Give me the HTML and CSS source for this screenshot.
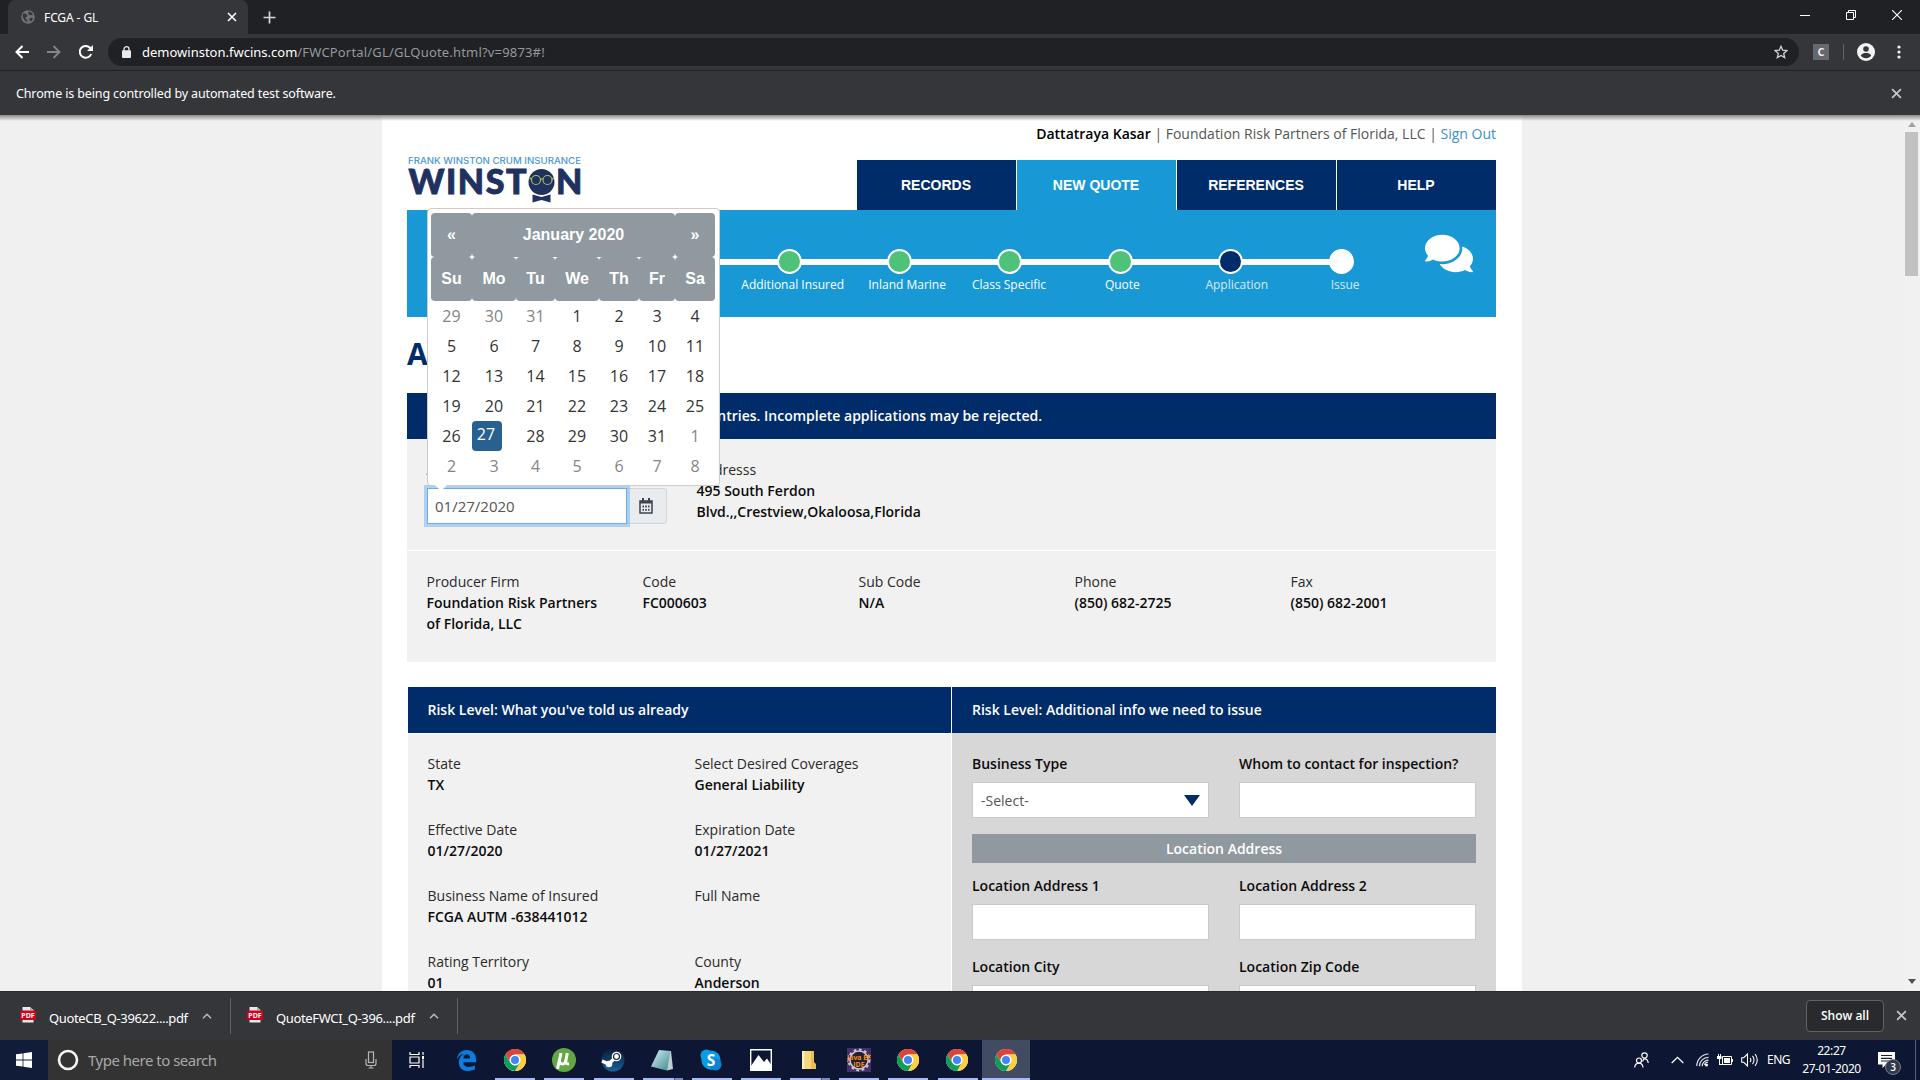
FILE: index.html
```html
<!DOCTYPE html>
<html lang="en">
<head>
<meta charset="utf-8">
<title>FCGA - GL</title>
<link rel="stylesheet" href="styles.css">
</head>
<body>
<svg width="0" height="0" class="defs">
  <defs>
    <symbol id="chrome" viewBox="0 0 24 24">
      <circle cx="12" cy="12" r="12" fill="#fff"/>
      <path d="M12 0A12 12 0 0 1 22.4 6H12a6 6 0 0 0-5.2 9L1.6 6A12 12 0 0 1 12 0z" fill="#db4437"/>
      <path d="M22.4 6A12 12 0 0 1 12 24l5.2-9A6 6 0 0 0 12 6z" fill="#ffcd40"/>
      <path d="M12 24A12 12 0 0 1 1.6 6l5.2 9a6 6 0 0 0 10.4 0z" fill="#0f9d58"/>
      <circle cx="12" cy="12" r="5.6" fill="#fff"/>
      <circle cx="12" cy="12" r="4.4" fill="#4285f4"/>
    </symbol>
    <symbol id="pdf" viewBox="0 0 16 17">
      <path d="M2.5 1h7.500l3.500 3v12.500h-11z" fill="#e9e9e9"/>
      <path d="M10 1v3h3.500z" fill="#aaa"/>
      <rect x="0" y="4.500" width="16" height="9.500" rx="1" fill="#d0021b"/>
      <text x="8" y="12" text-anchor="middle" font-size="7" font-weight="700" fill="#fff">PDF</text>
    </symbol>
    <symbol id="chev" viewBox="0 0 10 6"><path d="M1 5.200 5 1.200l4 4" fill="none" stroke="currentColor" stroke-width="1.500"/></symbol>
    <symbol id="cross" viewBox="0 0 10 10"><path d="M1 1l8 8M9 1l-8 8" fill="none" stroke="currentColor" stroke-width="1.600"/></symbol>
  </defs>
</svg>

<header class="browser">
  <div class="tabstrip">
    <div class="tab">
      <svg class="globe" width="14" height="14" viewBox="0 0 14 14"><circle cx="7" cy="7" r="6.800" fill="#6f7276"/><path d="M2 4c2-1 3 0 4 1s-.5 2-1.500 2.500S6 9.500 6.500 11 4 11 3 9.500 1.500 6 2 4zM8 1.500c1.500.5 3.500 1.500 4 3.500-1 1-2-.5-3 0s-2-1-1.800-2zM9 8c1.500-.5 2.500 0 3 .5-.5 1.500-1.500 2.500-2.500 3C8.500 10.500 8 9 9 8z" fill="#35363a"/></svg>
      <span class="tab-title">FCGA - GL</span>
      <svg class="tab-x" width="10" height="10"><use href="#cross"/></svg>
    </div>
    <svg class="plus" width="13" height="13" viewBox="0 0 13 13"><path d="M6.500 .5v12M.5 6.500h12" stroke="#d5d7da" stroke-width="1.700"/></svg>
    <div class="winbtns">
      <svg width="10" height="10" viewBox="0 0 10 10"><path d="M0 5.500h10" stroke="#fff"/></svg>
      <svg width="10" height="10" viewBox="0 0 10 10"><path d="M.5 2.500h7v7h-7zM2.500 2.500v-2h7v7h-2" fill="none" stroke="#fff"/></svg>
      <svg width="10" height="10" viewBox="0 0 10 10"><path d="M0 0l10 10M10 0L0 10" stroke="#fff" stroke-width="1.100"/></svg>
    </div>
  </div>
  <div class="toolbar">
    <svg class="nav" width="14" height="14" viewBox="0 0 14 14"><path d="M14 7H1.500M7.500 1 1.500 7l6 6" fill="none" stroke="#fff" stroke-width="2"/></svg>
    <svg class="nav" width="14" height="14" viewBox="0 0 14 14"><path d="M0 7h12.500M6.500 1l6 6-6 6" fill="none" stroke="#84878a" stroke-width="1.800"/></svg>
    <svg class="nav" width="14" height="14" viewBox="0 0 14 14"><path d="M12.200 9A5.900 5.900 0 1 1 11 2.800l1 1.100" fill="none" stroke="#fff" stroke-width="2"/><path d="M14 0v6H8z" fill="#fff"/></svg>
    <div class="omnibox">
      <svg width="9" height="12" viewBox="0 0 9 12"><path d="M2 5V3.200a2.500 2.500 0 0 1 5 0V5" fill="none" stroke="#e8eaed" stroke-width="1.300"/><rect x="0" y="4.300" width="9" height="7.700" rx="1" fill="#e8eaed"/></svg>
      <span class="url"><b>demowinston.fwcins.com</b>/FWCPortal/GL/GLQuote.html?v=9873#!</span>
      <svg class="star" width="14" height="14" viewBox="0 0 14 14"><path d="M7 1.300l1.700 3.900 4.200.4-3.200 2.800 1 4.200L7 10.400l-3.700 2.200 1-4.200L1.100 5.600l4.200-.4z" fill="none" stroke="#cfd1d4" stroke-width="1.300"/></svg>
    </div>
    <span class="ext">C</span>
    <span class="tb-div"></span>
    <svg class="avatar" width="18" height="18" viewBox="0 0 18 18"><circle cx="9" cy="9" r="9" fill="#f1f3f4"/><circle cx="9" cy="6" r="2.800" fill="#35363a"/><path d="M3.800 12.600c1-1.900 3.300-2.500 5.200-2.500s4.200.6 5.200 2.500a6.300 6.300 0 0 1-10.400 0z" fill="#35363a"/></svg>
    <svg width="4" height="14" viewBox="0 0 4 14" fill="#f1f3f4"><circle cx="2" cy="2" r="1.600"/><circle cx="2" cy="7" r="1.600"/><circle cx="2" cy="12" r="1.600"/></svg>
  </div>
  <div class="infobar">
    <span>Chrome is being controlled by automated test software.</span>
    <svg width="11" height="11"><use href="#cross"/></svg>
  </div>
</header>

<main class="viewport">
  <div class="page">
    <div class="masthead">
      <svg class="logo" width="176" height="48" viewBox="0 0 176 48">
        <text class="logo-small" x="1" y="10" textLength="173" lengthAdjust="spacingAndGlyphs">FRANK WINSTON CRUM INSURANCE</text>
        <text class="logo-big" x="1.500" y="40" textLength="118">WINST</text>
        <text class="logo-big" x="149" y="40">N</text>
        <circle cx="134.500" cy="28" r="13" fill="#20315f"/>
        <path d="M125.500 40.500l9 2.500 9-2.500v8l-9-2.500-9 2.500z" fill="#20315f"/>
        <g fill="none" stroke="#a6c65a" stroke-width="1.100"><circle cx="129" cy="26" r="4.500"/><circle cx="140.500" cy="26" r="4.500"/><path d="M133.500 25.500c1-.8 1.800-.8 2.500 0M124.500 25.500l-2-2M145 25.500l2-2"/></g>
      </svg>
      <div class="mast-right">
        <p class="user"><strong>Dattatraya Kasar</strong> | Foundation Risk Partners of Florida, LLC | <a>Sign Out</a></p>
        <nav class="mainnav"><a>RECORDS</a><a class="on">NEW QUOTE</a><a>REFERENCES</a><a>HELP</a></nav>
      </div>
    </div>
    <div class="steps">
      <ol>
        <li class="done"><i></i><span>Additional Insured</span></li>
        <li class="done"><i></i><span>Inland Marine</span></li>
        <li class="done"><i></i><span>Class Specific</span></li>
        <li class="done"><i></i><span>Quote</span></li>
        <li class="now"><i></i><span>Application</span></li>
        <li><i></i><span>Issue</span></li>
      </ol>
      <svg class="chat" width="48" height="43" viewBox="0 0 576 512"><path fill="#fff" d="M416 192c0-88.400-93.100-160-208-160S0 103.600 0 192c0 34.300 14.100 65.900 38 92-13.400 30.200-35.500 54.200-35.800 54.500-2.200 2.300-2.800 5.700-1.500 8.700S4.800 352 8 352c36.600 0 66.900-12.300 88.700-25 32.200 15.700 70.300 25 111.300 25 114.900 0 208-71.600 208-160zm122 220c23.900-26 38-57.700 38-92 0-66.900-53.500-124.200-129.300-148.100.9 6.600 1.300 13.300 1.300 20.100 0 105.900-107.700 192-240 192-10.800 0-21.300-.8-31.700-1.900C207.800 439.600 281.800 480 368 480c41 0 79.100-9.200 111.300-25 21.800 12.700 52.100 25 88.700 25 3.200 0 6.100-1.900 7.300-4.800 1.300-2.900.7-6.300-1.500-8.700-.3-.2-22.400-24.200-35.800-54.500z"/></svg>
    </div>
    <h1>A</h1>
    <div class="notice"><span>entries. Incomplete applications may be rejected.</span></div>
    <section class="producer">
      <div class="prow date-row">
        <div class="datecell">
          <label>A</label>
          <div class="dateinput">
            <div class="field">01/27/2020</div>
            <div class="addon"><svg width="14" height="16" viewBox="0 0 14 16"><path d="M1 3h12v12H1z" fill="none" stroke="#3d444b" stroke-width="1.500"/><path d="M1 3h12v2.500H1zM3 0h2v3H3zM9 0h2v3H9z" fill="#3d444b"/><path d="M3.500 7.500h1.500v2H3.500zM6.200 7.500h1.600v2H6.200zM9 7.500h1.500v2H9zM3.500 11h1.500v1.800H3.500zM6.200 11h1.600v1.800H6.200zM9 11h1.500v1.800H9z" fill="#3d444b"/></svg></div>
          </div>
          <div class="calendar">
            <table>
              <colgroup><col class="w41"><col class="w44"><col class="w39"><col class="w44"><col class="w40"><col class="w36"><col class="w40"></colgroup>
              <thead>
                <tr><th>«</th><th colspan="5">January 2020</th><th>»</th></tr>
                <tr><th>Su</th><th>Mo</th><th>Tu</th><th>We</th><th>Th</th><th>Fr</th><th>Sa</th></tr>
              </thead>
              <tbody>
                <tr><td class="off">29</td><td class="off">30</td><td class="off">31</td><td>1</td><td>2</td><td>3</td><td>4</td></tr>
                <tr><td>5</td><td>6</td><td>7</td><td>8</td><td>9</td><td>10</td><td>11</td></tr>
                <tr><td>12</td><td>13</td><td>14</td><td>15</td><td>16</td><td>17</td><td>18</td></tr>
                <tr><td>19</td><td>20</td><td>21</td><td>22</td><td>23</td><td>24</td><td>25</td></tr>
                <tr><td>26</td><td class="sel"><b>27</b></td><td>28</td><td>29</td><td>30</td><td>31</td><td class="off">1</td></tr>
                <tr><td class="off">2</td><td class="off">3</td><td class="off">4</td><td class="off">5</td><td class="off">6</td><td class="off">7</td><td class="off">8</td></tr>
              </tbody>
            </table>
          </div>
        </div>
        <dl><dt>Addresss</dt><dd>495 South Ferdon<br>Blvd.,,Crestview,Okaloosa,Florida</dd></dl>
      </div>
      <div class="prow firm-row">
        <dl><dt>Producer Firm</dt><dd>Foundation Risk Partners<br>of Florida, LLC</dd></dl>
        <dl><dt>Code</dt><dd>FC000603</dd></dl>
        <dl><dt>Sub Code</dt><dd>N/A</dd></dl>
        <dl><dt>Phone</dt><dd>(850) 682-2725</dd></dl>
        <dl><dt>Fax</dt><dd>(850) 682-2001</dd></dl>
      </div>
    </section>
    <section class="risk">
      <div class="told">
        <h2>Risk Level: What you've told us already</h2>
        <div class="told-grid">
          <dl><dt>State</dt><dd>TX</dd></dl>
          <dl><dt>Select Desired Coverages</dt><dd>General Liability</dd></dl>
          <dl><dt>Effective Date</dt><dd>01/27/2020</dd></dl>
          <dl><dt>Expiration Date</dt><dd>01/27/2021</dd></dl>
          <dl><dt>Business Name of Insured</dt><dd>FCGA AUTM -638441012</dd></dl>
          <dl><dt>Full Name</dt><dd></dd></dl>
          <dl><dt>Rating Territory</dt><dd>01</dd></dl>
          <dl><dt>County</dt><dd>Anderson</dd></dl>
        </div>
      </div>
      <div class="need">
        <h2>Risk Level: Additional info we need to issue</h2>
        <div class="need-grid">
          <div><label>Business Type</label><div class="box select"><span>-Select-</span><svg width="16" height="11" viewBox="0 0 16 11"><path d="M0 0h16L8 11z" fill="#002d6a"/></svg></div></div>
          <div><label>Whom to contact for inspection?</label><div class="box"></div></div>
          <h3>Location Address</h3>
          <div><label>Location Address 1</label><div class="box"></div></div>
          <div><label>Location Address 2</label><div class="box"></div></div>
          <div class="r3"><label>Location City</label><div class="box"></div></div>
          <div class="r3"><label>Location Zip Code</label><div class="box"></div></div>
        </div>
      </div>
    </section>
  </div>
  <div class="scrollbar">
    <svg width="8" height="5" viewBox="0 0 8 5"><path d="M0 5l4-5 4 5z" fill="#a3a3a3"/></svg>
    <div class="thumb"></div>
    <svg class="down" width="8" height="5" viewBox="0 0 8 5"><path d="M0 0l4 5 4-5z" fill="#505050"/></svg>
  </div>
</main>

<div class="downloads">
  <div class="dl"><svg width="16" height="17"><use href="#pdf"/></svg><span>QuoteCB_Q-39622....pdf</span><svg class="chev" width="10" height="6"><use href="#chev"/></svg></div>
  <div class="dl two"><svg width="16" height="17"><use href="#pdf"/></svg><span>QuoteFWCI_Q-396....pdf</span><svg class="chev" width="10" height="6"><use href="#chev"/></svg></div>
  <div class="showall">Show all</div>
  <svg class="dlx" width="11" height="11"><use href="#cross"/></svg>
</div>

<footer class="taskbar">
  <div class="start"><svg width="16" height="16" viewBox="0 0 16 16" fill="#fff"><path d="M0 2.300l6.600-.9v6.200H0zM7.400 1.300 16 0v7.600H7.400zM0 8.400h6.600v6.200L0 13.700zM7.400 8.400H16V16l-8.600-1.200z"/></svg></div>
  <div class="search">
    <svg width="22" height="22" viewBox="0 0 22 22"><circle cx="11" cy="11" r="9" fill="none" stroke="#f4f4f4" stroke-width="2.600"/></svg>
    <span>Type here to search</span>
    <svg class="mic" width="12" height="18" viewBox="0 0 12 18" fill="none" stroke="#b5b5b5" stroke-width="1.200"><rect x="3.500" y="1" width="5" height="10.500"/><path d="M1 8v4.500c0 1 1 2 2 2h6c1 0 2-1 2-2V8M6 14.500V17M3.500 17h5"/></svg>
  </div>
  <div class="apps">
    <div class="app plain"><svg width="16" height="16" viewBox="0 0 16 16" fill="none" stroke="#fff" stroke-width="1.200"><path d="M1 0v2.500h9V0M1 16v-2.500h9V16M1 5h9v6H1zM14 0v3M14 7.500V16"/><path d="M13 4h2v3h-2z" fill="#fff" stroke="none"/></svg></div>
    <div class="app plain"><svg class="edge" width="21" height="21" viewBox="0 0 24 24" fill="#0a7ee0"><path d="M1 10.700C1.700 4 6.500 0 12.300 0 19 0 23 4.800 23 11v3H8.200c.2 3.800 3.200 5.400 6.600 5.400 2.600 0 4.900-.8 6.800-1.900V22c-2 1.200-4.700 2-7.800 2C7.300 24 3.200 20 3.200 14.200c0-4.700 2.900-8.300 6.700-9.900C5.500 4.600 2.700 7.300 1 10.700zM8.400 9.800h7.800c0-3-1.300-4.900-3.800-4.900-2.200 0-3.600 2-4 4.900z"/></svg></div>
    <div class="app"><svg width="22" height="22"><use href="#chrome"/></svg></div>
    <div class="app"><svg width="24" height="24" viewBox="0 0 24 24"><circle cx="12" cy="12" r="12" fill="#62a744"/><path d="M9 5 7.500 12c-.4 2.400.6 4 2.800 4 1.900 0 3.100-1.200 3.500-3.200L15.300 5M7.600 11 5.500 21M13.800 12.500c-.4 2.600.7 3.700 3.200 3.300" fill="none" stroke="#fff" stroke-width="3"/></svg></div>
    <div class="app"><svg width="24" height="24" viewBox="0 0 24 24"><defs><linearGradient id="sg" x2="0" y2="1"><stop offset="0" stop-color="#0c1a33"/><stop offset="1" stop-color="#17619a"/></linearGradient></defs><circle cx="12" cy="12" r="11.500" fill="url(#sg)"/><path d="M1 13l6.500 3 6-5.500" fill="none" stroke="#fff" stroke-width="3.500"/><circle cx="15.500" cy="8.500" r="4.800" fill="#fff"/><circle cx="15.500" cy="8.500" r="3" fill="none" stroke="#15223e" stroke-width="1.200"/><circle cx="8" cy="16" r="3.300" fill="#fff"/></svg></div>
    <div class="app two-win"><svg width="24" height="24" viewBox="0 0 24 24"><defs><linearGradient id="ng" x2="1" y2="1"><stop offset="0" stop-color="#d6f1f3"/><stop offset="1" stop-color="#3f8894"/></linearGradient></defs><path d="M18 3 21 3l2 18-6 1.500z" fill="#c3ced0"/><path d="M9 2 20.500 3l-3.500 19.500L1 18.500z" fill="url(#ng)"/></svg></div>
    <div class="app"><svg width="22" height="22" viewBox="0 0 24 24"><circle cx="12" cy="12" r="10.500" fill="#0a9be3"/><circle cx="7" cy="7" r="6.500" fill="#0a9be3"/><circle cx="17" cy="17" r="6.500" fill="#0a83d6"/><text x="12" y="18" text-anchor="middle" font-size="17" font-weight="700" fill="#fff">S</text></svg></div>
    <div class="app"><svg width="22" height="22" viewBox="0 0 22 22"><path d="M.7.7h20.600v20.600H.7z" fill="none" stroke="#fff" stroke-width="1.400"/><path d="M1 17v4.500h20V15.500l-4-6-3 3.500L8.500 6z" fill="#fff"/></svg></div>
    <div class="app two-win"><svg class="folder" width="16" height="20" viewBox="0 0 16 20"><path d="M1 1h9v18H1z" fill="#f6d67a"/><path d="M10 1h3v11l2 2v5h-5z" fill="#e8bd52"/><path d="M1 1h2.500v18H1z" fill="#fdeeb5"/></svg></div>
    <div class="app"><svg width="24" height="24" viewBox="0 0 24 24"><rect width="24" height="24" fill="#43306a"/><circle cx="12" cy="12" r="9" fill="#24202e" stroke="#c9c6cf" stroke-width="1.500"/><circle cx="12" cy="12" r="10.400" fill="none" stroke="#c9c6cf" stroke-width="2" stroke-dasharray="2.700 2.700"/><text x="12" y="11.500" text-anchor="middle" font-size="7" font-weight="700" fill="#f08a2c" textLength="24">Java EE</text><text x="12" y="18.500" text-anchor="middle" font-size="7" font-weight="700" fill="#f08a2c">IDE</text></svg></div>
    <div class="app"><svg width="22" height="22"><use href="#chrome"/></svg></div>
    <div class="app"><svg width="22" height="22"><use href="#chrome"/></svg></div>
    <div class="app active"><svg width="22" height="22"><use href="#chrome"/></svg></div>
  </div>
  <div class="tray">
    <svg class="people" width="15" height="16" viewBox="0 0 15 16" fill="none" stroke="#fff" stroke-width="1.200"><circle cx="10.500" cy="3.500" r="2.700"/><path d="M8.500 9.500c.5-1.800 1-2.700 2-2.700 2 0 3.500 1.500 3.700 4.200"/><circle cx="5" cy="8.500" r="2.500"/><path d="M.7 15.500c.2-2.800 1.800-4.300 4.300-4.300s3.700 1.500 4 4.300"/></svg>
    <svg class="up" width="13" height="8" viewBox="0 0 13 8"><path d="M.7 7l5.800-5.700L12.300 7" fill="none" stroke="#fff" stroke-width="1.300"/></svg>
    <svg class="wifi" width="13" height="14" viewBox="0 0 13 14" fill="none" stroke="#e4e6ee" stroke-width="1.200"><path d="M.8 13A12 12 0 0 1 12.500 1M3.500 13.300a9 9 0 0 1 9-9M6.200 13.300a6.200 6.200 0 0 1 6.300-6.200"/><circle cx="10.500" cy="12" r="1.500" fill="#fff" stroke="none"/><path d="M8.500 12a3 3 0 0 1 3.500-2.700"/></svg>
    <svg class="batt" width="16" height="12" viewBox="0 0 16 12"><path d="M5.500 2.500h9v8h-9z" fill="none" stroke="#fff"/><path d="M7 4h6v5H7z" fill="#fff"/><path d="M15 5h1v3h-1zM0 2h4.500v3H0zM1 0h1v2H1zM3 0h1v2H3zM2 5h1v5h2.500v1H2z" fill="#fff"/></svg>
    <svg class="vol" width="17" height="14" viewBox="0 0 17 14" fill="none" stroke="#fff" stroke-width="1.100"><path d="M.7 4.700h2L6.500 1v12L2.700 9.300h-2zM9 5c.9 1 .9 3 0 4M11.500 3c2 2 2 6 0 8M14 1.200c3 3 3 8.500 0 11.600"/></svg>
    <span class="lang">ENG</span>
    <div class="clock"><span>22:27</span><span>27-01-2020</span></div>
    <div class="notif"><svg width="17" height="16" viewBox="0 0 17 16"><path d="M0 0h17v12.500H8L4.500 16v-3.500H0z" fill="#fff"/><path d="M3 3.500h11M3 6.300h11M3 9h8" stroke="#141d3a" stroke-width="1.200"/></svg><em>3</em></div>
  </div>
</footer>
</body>
</html>
```
FILE: styles.css
```css
* { box-sizing: border-box; }
body {
  margin: 0; width: 1920px; height: 1080px; overflow: hidden;
  display: flex; flex-direction: column;
  font-family: "Open Sans", "Noto Sans", sans-serif; font-size: 14px; line-height: 21px; color: #111;
}
h1, h2, h3, p, dl, dt, dd, ol { margin: 0; padding: 0; }
svg { display: block; flex: none; }
.defs { position: absolute; }

/* browser frame */
.browser { background: #35363a; color: #fff; height: 115px; flex: none; font-family: "Noto Sans", sans-serif; }
.tabstrip { height: 34px; background: #202124; display: flex; align-items: center; padding-left: 8px; }
.tab { width: 240px; height: 34px; background: #35363a; border-radius: 7px 7px 0 0; display: flex; align-items: center; padding: 0 11px 0 13px; }
.tab-title { margin-left: 9px; font-size: 12px; flex: 1; letter-spacing: -.1px; }
.plus { margin-left: 15px; }
.winbtns { margin-left: auto; display: flex; gap: 36px; padding-right: 18px; margin-top: -5px; }
.toolbar { height: 37px; border-bottom: 1px solid #202124; display: flex; align-items: center; padding-left: 15px; }
.nav { margin-right: 18px; }
.omnibox { width: 1691px; height: 28px; margin-left: -3px; margin-right: 14px; border-radius: 14px; background: #202124; display: flex; align-items: center; padding: 0 11px 0 14px; }
.url { margin-left: 11px; font-size: 13px; color: #95989c; flex: 1; letter-spacing: .18px; }
.url b { font-weight: 400; color: #fff; letter-spacing: 0; }
.ext { width: 16px; height: 16px; background: #66686b; color: #eee; font: 700 11px/16px "Open Sans", sans-serif; text-align: center; }
.tb-div { width: 1px; height: 16px; background: #606367; margin: 0 13px 0 14px; }
.avatar { margin-right: 22px; }
.infobar { height: 44px; display: flex; align-items: center; justify-content: space-between; padding: 0 18px 0 16px; font-size: 12.500px; letter-spacing: -.13px; }
.infobar svg { color: #c4c6c9; }

/* page */
.viewport { height: 876px; flex: none; overflow: hidden; background: #f0f0f0; position: relative; display: flex; justify-content: flex-end; }
.viewport::before { content: ""; position: absolute; inset: 0 0 auto; height: 6px; background: linear-gradient(#8b8b8b, rgba(200,200,200,0)); z-index: 5; }
.page { width: 1140px; background: #fff; padding: 0 26px 0 25px; flex: none; margin-right: 398px; height: 1000px; }
.masthead { height: 95px; display: flex; justify-content: space-between; }
.logo { margin-top: 39px; overflow: visible; }
.logo-small { font: 500 8.700px Inter, sans-serif; fill: #4d97cf; }
.logo-big { font: 900 34px Lato, sans-serif; fill: #20315f; stroke: #20315f; stroke-width: .9px; }
.mast-right { width: 639px; display: flex; flex-direction: column; justify-content: space-between; }
.user { text-align: right; padding-top: 8px; color: #555; white-space: nowrap; }
.user strong { font-weight: 600; color: #000; }
.user a { color: #3a8fcb; }
.mainnav { display: flex; gap: 1px; height: 50px; }
.mainnav a { flex: 1; background: #002d6a; color: #fff; font: 700 14px/50px "Liberation Sans", sans-serif; text-align: center; padding-right: 1px; }
.mainnav .on { background: #1998d6; height: 51px; }
.steps { height: 107px; background: #1998d6; display: flex; position: relative; }
.steps ol { list-style: none; display: flex; margin-left: 327px; width: 662px; position: relative; padding-top: 39px; }
.steps ol::before { content: ""; position: absolute; left: -200px; width: 807px; top: 49px; height: 6px; background: #fff; }
.steps li { width: 110.400px; flex: none; display: flex; flex-direction: column; align-items: center; font-size: 12px; line-height: 16px; color: #fff; position: relative; }
.steps i { width: 25px; height: 25px; border-radius: 50%; border: 2px solid #fff; background: #fff; margin-bottom: 3px; }
.steps .done i { background: #4fc27a; }
.steps .now i { background: #002d6a; }
.steps span { padding-left: 7px; white-space: nowrap; }
.steps li:nth-child(2) span { padding-left: 15px; }
.steps li:nth-child(3) span { padding-right: 2px; padding-left: 0; }
.steps li:nth-child(4) span { padding-left: 4px; }
.steps li:nth-child(n+5) span { padding-left: 12px; opacity: .8; }
.steps li:nth-child(6) span { padding-left: 8px; }
.chat { margin: 22px 0 0 29px; }
h1 { font-size: 30px; line-height: 40px; font-weight: 700; color: #002d6a; padding: 17px 0 19px; }
.notice { height: 46px; background: #002d6a; color: #fff; font-weight: 600; line-height: 46px; display: flex; justify-content: flex-end; padding-right: 454px; }
.notice span { white-space: nowrap; }
.producer { background: #f1f1f1; height: 223px; }
.prow { display: flex; padding: 0 20px 0 19.500px; }
dt { color: #2a2a2a; } dd { font-weight: 600; color: #0c0c0c; min-height: 21px; }
.date-row { height: 112px; padding-top: 20px; border-bottom: 1px solid #fff; gap: 30px; }
.datecell { width: 240px; position: relative; }
.datecell label { display: block; height: 29px; font-weight: 600; color: #000; }
.dateinput { display: flex; height: 36px; margin-left: .5px; }
.field { width: 200px; background: #fff; border: 1px solid #66afe9; box-shadow: 0 0 0 3px rgba(120,180,240,.55); padding-left: 7px; font-size: 15px; line-height: 34px; color: #555; position: relative; }
.addon { flex: 1; background: #e9ecef; border: 1px solid #d3d6d9; border-left: 0; border-radius: 0 4px 4px 0; display: flex; align-items: center; padding-left: 12px; }
.calendar { position: absolute; left: .5px; top: -251px; width: 293px; height: 278px; background: #fff; border: 1px solid #ccc; border-radius: 4px; padding: 4px 3px; z-index: 3; }
.calendar::after { content: ""; position: absolute; left: 7px; bottom: -6px; border: 6px solid transparent; border-top-color: #fff; border-bottom: 0; }
.calendar table { border-collapse: collapse; table-layout: fixed; width: 284px; }
.w41 { width: 41px; } .w44 { width: 44px; } .w39 { width: 39px; } .w40 { width: 40px; } .w36 { width: 36px; }
th { height: 44px; padding: 0; background: #8f999f; border-radius: 4px; color: #fff; font: 700 16px/20px "Liberation Sans", sans-serif; }
td { height: 30px; padding: 0; text-align: center; font-size: 16px; line-height: 28px; color: #333; }
.off { color: #858585; }
.sel { text-align: left; }
.sel b { display: block; width: 30px; height: 30px; border-radius: 4px; background: #286090; color: #fff; font-weight: 500; line-height: 27px; text-align: center; font-size: 16px; padding-right: 2px; }
.firm-row { padding-top: 20px; padding-right: 0; }
.firm-row dl { width: 216px; flex: none; }
.firm-row dl:last-child { width: 205px; }
.risk { margin: 25px 0 0 1px; display: grid; grid-template-columns: 543px 544px; gap: 1px; height: 330px; }
h2 { height: 46px; background: #002d6a; color: #fff; font-size: 14px; font-weight: 600; line-height: 46px; padding-left: 20px; }
.told h2 { padding-left: 19.500px; }
.told, .need { display: flex; flex-direction: column; }
.told-grid { flex: 1; background: #f1f1f1; padding: 19px 20px 19px 19.500px; display: grid; grid-template-columns: 267px 1fr; grid-auto-rows: 66px; margin-top: 1px; }
.need-grid { flex: 1; background: #d7d7d7; padding: 20px 20px; display: grid; grid-template-columns: 237px 237px; column-gap: 30px; align-content: start; }
.need-grid label { display: block; font-weight: 600; color: #0c0c0c; margin-bottom: 8px; }
.box { height: 36px; background: #fff; border: 1px solid #c9c9c9; }
.select { display: flex; align-items: center; justify-content: space-between; padding: 0 8px; color: #555; }
h3 { grid-column: 1 / 3; margin: 16px 0 12px; height: 29px; line-height: 29px; width: 504px; background: #8f999f; color: #fff; font-size: 14px; font-weight: 600; text-align: center; }
.r3 { margin-top: 16px; }
.scrollbar { position: absolute; right: 0; top: 0; width: 17px; height: 876px; background: #f1f1f1; display: flex; flex-direction: column; align-items: center; padding: 7px 0 7px; }
.thumb { width: 13px; height: 144px; background: #c1c1c1; margin-top: 5px; }
.scrollbar .down { margin-top: auto; }

/* download shelf */
.downloads { height: 49px; flex: none; background: #35363a; border-top: 1px solid #28292c; display: flex; align-items: center; color: #fff; font: 13px "Noto Sans", sans-serif; padding-right: 13px; }
.dl { width: 231px; height: 36px; display: flex; align-items: center; border-right: 1px solid #5f6164; padding-left: 20px; }
.dl.two { width: 227px; padding-left: 16px; }
.dl > svg:first-child { margin-top: -4px; }
.dl span { margin-left: 13px; width: 139px; white-space: nowrap; letter-spacing: -.35px; padding-top: 4px; }
.dl .chev { margin-left: 14px; color: #bbb; }
.showall { margin-left: auto; width: 78px; height: 32px; background: #292a2d; border: 1px solid #5f6368; border-radius: 4px; text-align: center; font: 600 12px/29px "Open Sans", sans-serif; margin-top: -1px; }
.dlx { margin-left: 12px; margin-top: -1px; color: #c4c6c9; }

/* taskbar */
.taskbar { height: 40px; flex: none; background: #0d1733; display: flex; color: #fff; }
.start { width: 48px; background: #101c38; display: flex; align-items: center; justify-content: center; }
.search { width: 344px; background: #333; display: flex; align-items: center; padding: 0 15px 0 9px; color: #a9a9a9; font: 15px "Noto Sans", sans-serif; }
.search span { margin-left: 9px; flex: 1; letter-spacing: -.55px; }
.search span { letter-spacing: -.5px; }
.apps { display: flex; }
.app { width: 49.150px; height: 40px; display: flex; align-items: center; justify-content: center; position: relative; }
.app::after { content: ""; position: absolute; bottom: 0; left: 5px; width: 40px; height: 2px; background: #a9bbf5; }
.two-win::after { background: linear-gradient(90deg, #a9bbf5 31px, #48516b 31px, #48516b 32px, #7d8bb8 32px); }
.plain::after { display: none; }
.edge { margin-left: 2px; }
.folder { margin-right: 2px; }
.active { background: #414c63; width: 48px; }
.active::after { left: 0; width: 48px; }
.tray { margin-left: auto; display: flex; align-items: center; width: 286px; font: 12px/18px "Noto Sans", sans-serif; }
.up { margin-left: 22px; } .wifi { margin-left: 12px; } .batt { margin-left: 8px; } .vol { margin-left: 8px; }
.lang { margin-left: 9px; width: 24px; letter-spacing: -.5px; }
.clock { margin-left: 11px; width: 59px; display: flex; flex-direction: column; align-items: center; letter-spacing: -.4px; white-space: nowrap; }
.notif { margin-left: 17px; position: relative; flex: 1; height: 40px; border-right: 1px solid #5b6378; padding-top: 12px; margin-right: 4px; }
.notif em { position: absolute; left: 7px; top: 19px; width: 16px; height: 16px; border-radius: 50%; background: #32384a; border: 1px solid #777d8c; font: 600 10px/14px "Open Sans", sans-serif; text-align: center; }
```
